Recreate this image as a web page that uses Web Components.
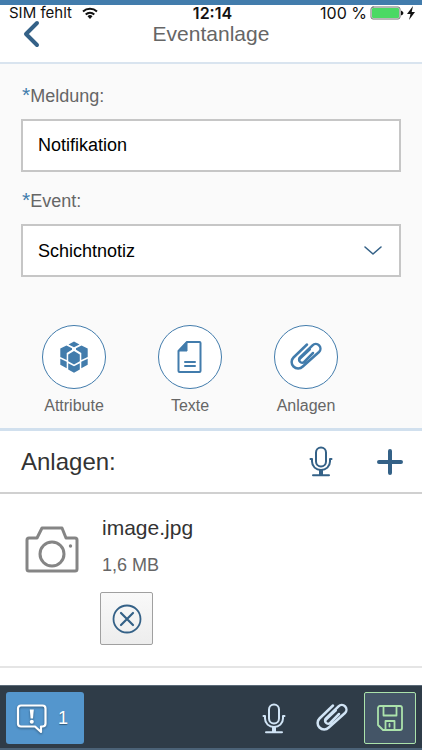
<!DOCTYPE html>
<html lang="de">
<head>
<meta charset="utf-8">
<meta name="viewport" content="width=device-width, initial-scale=1">
<title>Eventanlage</title>
<style>
body { margin: 0; font-family: "Liberation Sans", Arial, sans-serif; background: #fff; }
</style>
</head>
<body>
<event-app></event-app>
<script>
const define = (name, html, setup) => {
  const template = document.createElement('template');
  template.innerHTML = html;
  customElements.define(name, class extends HTMLElement {
    connectedCallback() {
      if (this.shadowRoot) return;
      const root = this.attachShadow({ mode: 'open' });
      root.append(template.content.cloneNode(true));
      if (setup) setup(this, root);
    }
  });
};

const icons = {
  back: [18, 28, '<path d="M15 3 4 14l11 11" stroke-width="4"/>'],
  wifi: [18, 13, '<g stroke-width="2" stroke-linecap="butt"><path d="M2 4.500a10.500 10.500 0 0 1 14 0M4.700 7.500a6.500 6.500 0 0 1 8.600 0"/></g><path d="m9 12-2.500-2.700a3.500 3.500 0 0 1 5 0z" fill="currentColor" stroke="none"/>'],
  battery: [34, 14, '<rect x="1" y="1" width="29" height="12" rx="2" stroke="#6f6f6f" stroke-width="1"/><rect x="2" y="2" width="27" height="10" rx="1" fill="#4bd964" stroke="none"/><path d="M31 4.500q2.500 1 2.500 2.500T31 9.500z" fill="#111" stroke="none"/>'],
  bolt: [9, 14, '<path d="M6 0 0 8h3.500L2 14l6-8H4.700z" fill="#111" stroke="none"/>'],
  down: [20, 12, '<path d="m2 2 8 7 8-7" stroke-width="1.600"/>'],
  cube: [30, 32, '<g fill="currentColor" stroke="none"><path d="m15 .5 5.500 3L15 6.300 9.500 3.500zM7.500 4.500l5.500 2.800v1.500L7.700 12v7L1.300 16V7.500zM22.500 4.500 17 7.300v1.500l5.300 3.200v7l6.400-3V7.500zM15 10l5.800 3.400v6.800L15 23.500l-5.800-3.300v-6.800zM1.300 17.800l6.400 3v6.400l-6.400-3.400zM28.700 17.800l-6.400 3v6.400l6.400-3.400zM9.200 22.200 15 25.200l5.800-3v6.200L15 31.700l-5.800-3.300z"/></g>'],
  doc: [26, 34, '<path d="M10 2h12.500a1 1 0 0 1 1 1v28a1 1 0 0 1-1 1h-20a1 1 0 0 1-1-1V11z" stroke-width="2"/><path d="M10 2v9H1.500z" fill="currentColor" stroke-width="1"/><path d="M8 22h10M8 26h10" stroke-width="2"/>'],
  clip: [34, 30, '<path d="M18 2.500 4.500 15.500a6.300 6.300 0 0 0 0 9c2.600 2.600 6.700 2.600 9.300 0L30 10a4.600 4.600 0 0 0-6.500-6.700L11 15.500a3 3 0 0 0 4.200 4.300L24 11" stroke-width="2.500"/><path d="M21 7.500 10 17.700" stroke-width="2"/>'],
  mic: [24, 31, '<g stroke-width="2"><rect x="7" y="1.500" width="10" height="19" rx="5"/><path d="M1.500 13H3v2.500c0 5 4 8.500 9 8.500s9-3.500 9-8.500V13h1.500M4 29.200h16"/><path d="M12 24v5" stroke-width="4" stroke-linecap="butt"/></g>'],
  plus: [28, 28, '<path d="M14 3v22M3 14h22" stroke-width="4"/>'],
  camera: [54, 48, '<g stroke-width="3"><path d="M4 12h8l5-10h20l4 10h9a2 2 0 0 1 2 2v29a2 2 0 0 1-2 2H4a2 2 0 0 1-2-2V14a2 2 0 0 1 2-2z"/><circle cx="27" cy="28" r="12"/></g><circle cx="45.500" cy="20" r="1.700" fill="currentColor" stroke="none"/>'],
  decline: [30, 30, '<circle cx="15" cy="15" r="13.500" stroke-width="1.800"/><path d="m9 9 12 12M21 9 9 21" stroke-width="2.200"/>'],
  message: [31, 31, '<path d="M4 2.500h21.500a3 3 0 0 1 3 3v15a3 3 0 0 1-3 3H24v5.500l-6-5.500H4a3 3 0 0 1-3-3v-15a3 3 0 0 1 3-3z" stroke-width="2.200"/><path d="M12.800 6.500h4l-.8 9h-2.400z" fill="currentColor" stroke="none"/><circle cx="14.800" cy="18.800" r="2" fill="currentColor" stroke="none"/>'],
  save: [26, 26, '<g stroke-width="1.800"><path d="M3 1h20a2 2 0 0 1 2 2v20a2 2 0 0 1-2 2H6l-5-5V3a2 2 0 0 1 2-2z"/><path d="M6.500 1v9.500h13V1M8.500 25v-9h9v9M12.500 19v2.500"/></g>']
};

define('app-icon', `<style>
  :host { display: block; flex: none; }
  svg { display: block; overflow: visible; fill: none; stroke: currentColor; stroke-linecap: round; stroke-linejoin: round; }
</style><span></span>`, (el, root) => {
  const [w, h, body] = icons[el.getAttribute('name')];
  root.querySelector('span').innerHTML = `<svg width="${w}" height="${h}" viewBox="0 0 ${w} ${h}" aria-hidden="true">${body}</svg>`;
});

define('status-bar', `<style>
  :host { display: grid; grid-template-columns: 1fr auto 1fr; align-items: center; padding: 0 6px 0 9px; height: 16px;
    font: 16px/16px Inter, "Liberation Sans", sans-serif; color: #111; }
  div { display: flex; align-items: center; }
  .left { gap: 9px; font-size: 15px; }
  .right { justify-content: flex-end; gap: 3px; }
  b { font-weight: 600; }
</style>
<div class="left"><span>SIM fehlt</span><app-icon name="wifi"></app-icon></div>
<b>12:14</b>
<div class="right"><span>100 %</span><app-icon name="battery"></app-icon><app-icon name="bolt"></app-icon></div>`);

define('page-header', `<style>
  :host { display: block; border-top: 5px solid #427cac; border-bottom: 2px solid #d9e4ef; padding: 0 0 20px; background: #fff; }
  .bar { display: grid; grid-template-columns: 40px 1fr 40px; align-items: center; height: 22px; margin-top: -1px; padding: 0 22px; }
  button { justify-self: start; display: block; height: 28px; border: 0; padding: 0; background: none; color: #346187; }
  h1 { margin: 0; text-align: center; font-size: 21px; line-height: 22px; font-weight: 400; color: #666; }
</style>
<status-bar></status-bar>
<div class="bar"><button aria-label="Zurück"><app-icon name="back"></app-icon></button><h1><slot></slot></h1></div>`);

define('event-form', `<style>
  :host { display: block; background: #fafafa; border-bottom: 3px solid #d1e0ee; padding: 20px 21px 11px; }
  label { display: block; padding-left: 1px; font-size: 18px; line-height: 24px; color: #666; margin-bottom: 11px; }
  label i { font-style: normal; font-size: 21px; line-height: 1; vertical-align: top; color: #427cac; }
  input, select { display: block; width: 100%; height: 53px; box-sizing: border-box; border: 2px solid #c6c6c6; border-radius: 0;
    background: #fff; padding: 0 15px; font: inherit; font-size: 18px; color: #000; appearance: none; outline: 0; }
  input { margin-bottom: 17px; }
  .select { display: grid; align-items: center; color: #346187; }
  .select > * { grid-area: 1 / 1; }
  .select app-icon { justify-self: end; margin-right: 18px; pointer-events: none; }
  nav { display: flex; gap: 36px; padding: 48px 13px 0; }
</style>
<label for="note"><i>*</i>Meldung:</label>
<input id="note" value="Notifikation">
<label for="event"><i>*</i>Event:</label>
<div class="select"><select id="event"><option>Schichtnotiz</option></select><app-icon name="down"></app-icon></div>
<nav>
  <round-action icon="cube">Attribute</round-action>
  <round-action icon="doc">Texte</round-action>
  <round-action icon="clip">Anlagen</round-action>
</nav>`);

define('round-action', `<style>
  :host { display: block; width: 80px; }
  button { display: flex; flex-direction: column; align-items: center; gap: 6px; width: 100%; border: 0; padding: 0; background: none; font: inherit; }
  .disc { display: grid; place-items: center; width: 64px; height: 64px; box-sizing: border-box; border: 1px solid #427cac; border-radius: 50%; background: #fff; color: #427cac; }
  .text { font-size: 16px; line-height: 22px; color: #666; }
</style>
<button><span class="disc"></span><span class="text"><slot></slot></span></button>`, (el, root) => {
  const icon = document.createElement('app-icon');
  icon.setAttribute('name', el.getAttribute('icon'));
  root.querySelector('.disc').append(icon);
});

define('attachment-bar', `<style>
  :host { display: flex; align-items: center; height: 61px; padding: 0 18px 0 21px; border-bottom: 2px solid #d0d0d0; background: #fff; }
  h2 { flex: 1; margin: 0; font-size: 24px; line-height: 28px; font-weight: 400; color: #333; }
  div { display: flex; align-items: center; gap: 43px; }
  button { border: 0; padding: 0; background: none; color: #346187; }
</style>
<h2><slot></slot></h2>
<div><button aria-label="Aufnehmen"><app-icon name="mic"></app-icon></button><button aria-label="Hinzufügen"><app-icon name="plus"></app-icon></button></div>`);

define('attachment-item', `<style>
  :host { display: flex; gap: 21px; padding: 20px 25px 21px; border-bottom: 2px solid #e5e5e5; color: #858585; }
  app-icon[name=camera] { margin-top: 12px; }
  .name { padding-left: 2px; font-size: 21px; line-height: 28px; color: #333; }
  .size { padding-left: 2px; font-size: 18px; line-height: 24px; color: #666; margin-top: 11px; }
  button { display: grid; place-items: center; width: 53px; height: 53px; margin-top: 15px; padding: 0; border: 1px solid #a0a0a0; border-radius: 2px;
    background: linear-gradient(#f9f9f9, #ededed); color: #346187; }
</style>
<app-icon name="camera"></app-icon>
<div><div class="name"><slot name="file"></slot></div><div class="size"><slot name="size"></slot></div>
<button aria-label="Entfernen"><app-icon name="decline"></app-icon></button></div>`);

define('action-footer', `<style>
  :host { display: flex; justify-content: space-between; align-items: center; padding: 6px 6px 4px; background: #2f3c48; border-top: 1px solid #5b6a78; border-bottom: 2px solid #4b6277; }
  .group { display: flex; align-items: center; }
  button { display: flex; align-items: center; justify-content: center; box-sizing: border-box; height: 52px; padding: 0; border: 0; background: none; font: inherit; color: #d1e4f5; }
  .tool { width: 58px; }
  .messages { width: 78px; gap: 10px; padding-right: 5px; border-radius: 3px; background: #5496cd; color: #fff; font-size: 18px; text-shadow: 0 1px 1px #0006; }
  .messages app-icon { filter: drop-shadow(0 1px 1px #0006); }
  .save { width: 52px; margin-left: 3px; border: 1px solid #abe2ab; border-radius: 2px; background: #445567; color: #abe2ab; }
</style>
<button class="messages" aria-label="1 Meldung"><app-icon name="message"></app-icon><span>1</span></button>
<div class="group">
  <button class="tool" aria-label="Aufnehmen"><app-icon name="mic"></app-icon></button>
  <button class="tool" aria-label="Anlage"><app-icon name="clip"></app-icon></button>
  <button class="save" aria-label="Sichern"><app-icon name="save"></app-icon></button>
</div>`);

define('event-app', `<style>
  :host { display: flex; flex-direction: column; min-height: 100vh; }
  action-footer { margin-top: auto; }
</style>
<page-header>Eventanlage</page-header>
<event-form></event-form>
<attachment-bar>Anlagen:</attachment-bar>
<attachment-item><span slot="file">image.jpg</span><span slot="size">1,6 MB</span></attachment-item>
<action-footer></action-footer>`);
</script>
</body>
</html>
